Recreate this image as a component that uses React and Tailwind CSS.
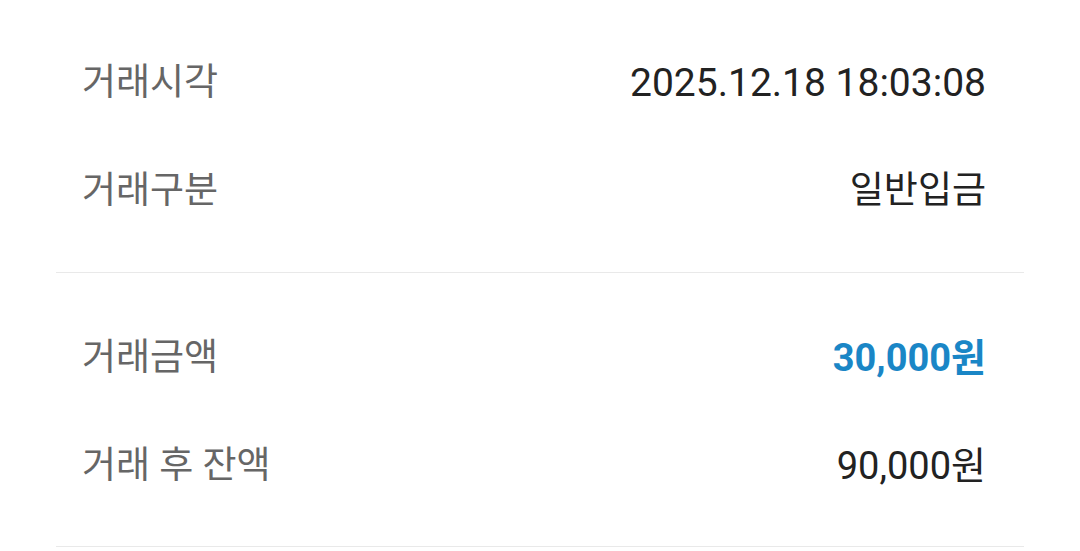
const font = { fontFamily: 'Roboto, "Noto Sans CJK KR", sans-serif' };

function Row({ label, value, accent, size = 'text-[38px]' }) {
  return (
    <div className="flex h-[108px] items-center justify-between pl-[26px] pr-[38px]">
      <span className="text-[37px] text-[#666666]">{label}</span>
      <span
        className={
          accent
            ? `${size} font-bold text-[#1a86c6]`
            : `${size} text-[#222222]`
        }
      >
        {value}
      </span>
    </div>
  );
}

export default function App() {
  return (
    <div className="min-h-[551px] bg-white px-[56px] antialiased" style={font}>
      <div className="border-b border-[#e9e9e9] pt-[29px] pb-[27px]">
        <Row label="거래시각" value="2025.12.18 18:03:08" size="text-[39px]" />
        <Row label="거래구분" value="일반입금" size="text-[37px]" />
      </div>
      <div className="border-b border-[#e9e9e9] pt-[31px] pb-[26px]">
        <Row label="거래금액" value="30,000원" accent />
        <Row label="거래 후 잔액" value="90,000원" />
      </div>
    </div>
  );
}
